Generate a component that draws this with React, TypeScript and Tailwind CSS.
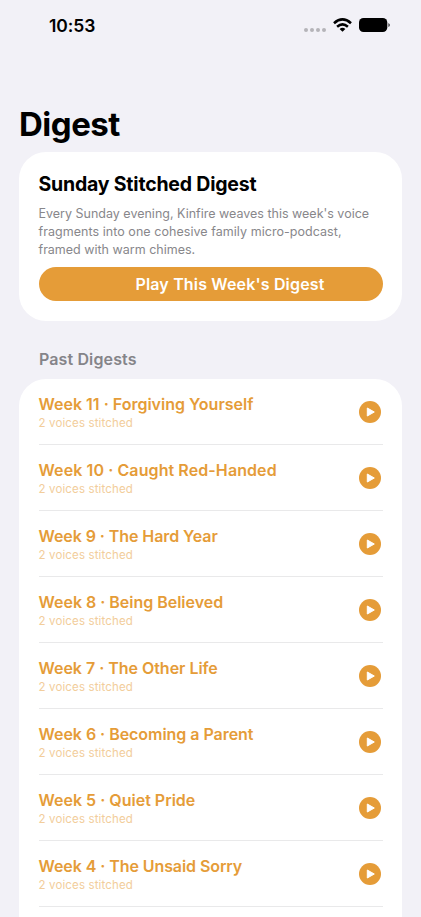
const weeks: { n: number; title: string; tracking: string }[] = [
  { n: 11, title: 'Forgiving Yourself', tracking: 'tracking-normal' },
  { n: 10, title: 'Caught Red-Handed', tracking: 'tracking-[0.09px]' },
  { n: 9, title: 'The Hard Year', tracking: 'tracking-[-0.08px]' },
  { n: 8, title: 'Being Believed', tracking: 'tracking-[-0.02px]' },
  { n: 7, title: 'The Other Life', tracking: 'tracking-[-0.03px]' },
  { n: 6, title: 'Becoming a Parent', tracking: 'tracking-[-0.04px]' },
  { n: 5, title: 'Quiet Pride', tracking: 'tracking-normal' },
  { n: 4, title: 'The Unsaid Sorry', tracking: 'tracking-[-0.08px]' },
];

function StatusBar() {
  return (
    <div className="flex h-[50px] shrink-0 items-center justify-between pr-[30px] pl-[49px]">
      <span className="pt-0.5 text-[17.5px] font-semibold tracking-[-0.05px]">10:53</span>
      <div className="flex items-center gap-[7px]">
        <div className="flex gap-[2px] pt-[9px]">
          {[0, 1, 2, 3].map((i) => <span key={i} className="size-1 rounded-full bg-[#b5b4b9]" />)}
        </div>
        <svg width="19" height="14" viewBox="0 0 19 14" fill="none" stroke="#000" strokeWidth="2.6">
          <path d="M1 5.2Q9.5-2.3 18 5.2" />
          <path d="M4.1 8.7Q9.5 4.1 14.9 8.7" />
          <path d="M9.5 13.8L6.6 11Q9.5 8.6 12.4 11Z" fill="#000" stroke="none" />
        </svg>
        <svg width="32" height="14" viewBox="0 0 32 14">
          <rect width="28.3" height="14" rx="4.5" />
          <path d="M29.3 4.9Q31 5.7 31 7T29.3 9.1Z" fill="#4a494c" />
        </svg>
      </div>
    </div>
  );
}

function PlayIcon() {
  return (
    <svg className="mr-[2px]" width="22" height="22" viewBox="0 0 22 22">
      <circle cx="11" cy="11" r="11" fill="#e59c38" />
      <path d="M8.3 7V15L15.3 11Z" fill="white" stroke="white" strokeWidth="1" strokeLinejoin="round" />
    </svg>
  );
}

export default function App() {
  return (
    <main className="flex h-[917px] flex-col overflow-hidden bg-[#f2f1f7] font-['Inter',sans-serif] text-black">
      <StatusBar />
      <div className="flex grow flex-col px-[19px]">
        <h1 className="mt-[53px] h-[48.7px] text-[33px] leading-[43px] font-bold tracking-[-0.5px]">Digest</h1>
        <section className="h-[169.5px] rounded-[27px] bg-white px-[19.5px] pt-5">
          <h2 className="text-[19.5px] leading-[25px] font-bold tracking-[-0.2px]">Sunday Stitched Digest</h2>
          <p className="mt-2 text-[12.5px] leading-[18px] whitespace-nowrap text-[#88878b]">
            Every Sunday evening, Kinfire weaves this week's voice<br />
            <span className="tracking-[0.05px]">fragments into one cohesive family micro-podcast,</span><br />
            framed with warm chimes.
          </p>
          <button className="mt-[8.3px] h-[34px] w-full rounded-full bg-[#e59c38] pl-[39px] text-[16px] font-semibold tracking-[0.16px] text-white">
            Play This Week's Digest
          </button>
        </section>
        <h3 className="mt-[26.2px] ml-5 text-[16px] leading-6 font-semibold tracking-[0.12px] text-[#858489]">Past Digests</h3>
        <section className="mt-2 grow rounded-t-[27px] bg-white px-[19.5px]">
          {weeks.map(({ n, title, tracking }) => (
            <div key={n} className="flex h-[66px] items-center justify-between border-b border-[#e9e9ea] text-[#e59c38]">
              <div className="pt-px">
                <div className={`text-[16px] leading-[22px] font-semibold ${tracking}`}>Week {n} · {title}</div>
                <div className="text-[11.5px] leading-[17px] tracking-[0.14px] text-[#f2cd9b]">2 voices stitched</div>
              </div>
              <PlayIcon />
            </div>
          ))}
        </section>
      </div>
    </main>
  );
}
